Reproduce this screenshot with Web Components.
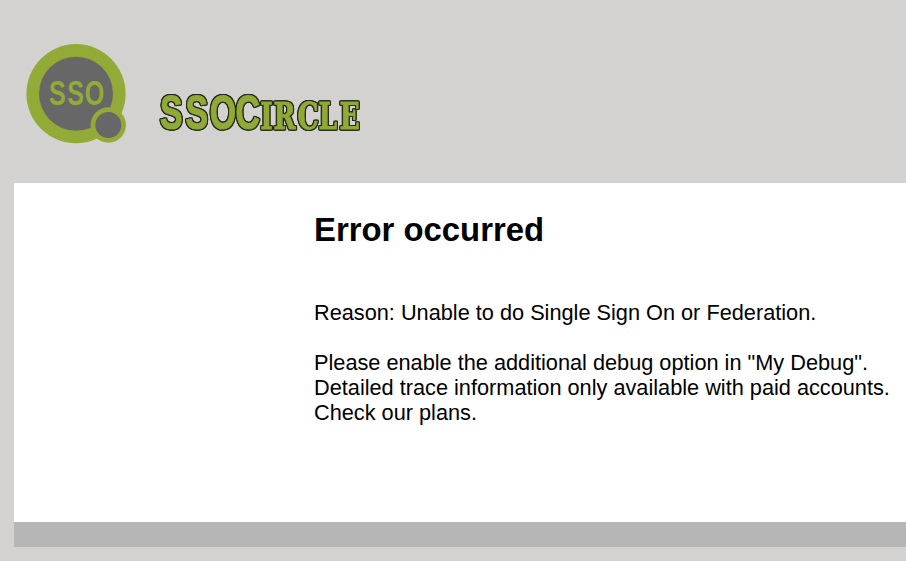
<!DOCTYPE html>
<html lang="en"><head><meta charset="utf-8"><title>SSOCircle</title>
<style>html,body{margin:0;height:100%;background:#d3d2d0;overflow:hidden}body{font:21.73px/25px "Liberation Sans",Arial,sans-serif;color:#000}</style></head>
<body>
<sso-page>
  <sso-brand slot="header"></sso-brand>
  <error-message heading="Error occurred">
    <p>Reason: Unable to do Single Sign On or Federation.</p>
    <p>Please enable the additional debug option in "My Debug".<br>Detailed trace information only available with paid accounts.<br>Check our plans.</p>
  </error-message>
</sso-page>
<script>
class SsoPage extends HTMLElement{constructor(){super();this.attachShadow({mode:'open'}).innerHTML=`
<style>:host{display:grid;grid-template-rows:183px 339px 25px;padding-left:14px;box-sizing:border-box;height:561px}
main{background:#fff;padding-left:300px}footer{background:#b6b6b6}</style>
<header><slot name="header"></slot></header><main><slot></slot></main><footer></footer>`}}
customElements.define('sso-page',SsoPage);

class SsoBrand extends HTMLElement{constructor(){super();this.attachShadow({mode:'open'}).innerHTML=`
<style>:host{display:block;padding:40px 0 0 6px}svg{display:block;overflow:visible}
text{font-family:"Liberation Sans",Arial,sans-serif;font-weight:bold}
.word{fill:#90aa36;stroke:#90aa36;stroke-width:1.2px;stroke-linejoin:miter;stroke-miterlimit:3}
.outline{filter:drop-shadow(1px 0 0 #25281c) drop-shadow(-1px 0 0 #25281c) drop-shadow(0 1px 0 #25281c) drop-shadow(0 -1px 0 #25281c)}
.caps{font-family:"DejaVu Serif","Liberation Serif",serif;stroke-width:.9px}</style>
<svg width="450" height="110" viewBox="20 40 450 110" role="img" aria-label="SSOCircle">
<circle cx="76" cy="93.7" r="49.6" fill="#92ab37"/><circle cx="76" cy="93.7" r="37" fill="#676767"/>
<circle cx="108.3" cy="125" r="17.7" fill="#92ab37"/><circle cx="108.3" cy="125" r="13" fill="#676767"/>
<text transform="translate(49 105.4) scale(.7 1)" font-size="36" x="0 26 51" fill="#92ab37">SSO</text>
<g class="outline"><text class="word" transform="translate(160 129) scale(.69 1)" x="0 37 72 109.5" font-size="49">SSOC</text></g>
<g class="outline"><text class="word caps" transform="translate(260.3 129) scale(.7 1)" x="0 19 53 83 113" font-size="38">IRCLE</text></g>
</svg>`}}
customElements.define('sso-brand',SsoBrand);

class ErrorMessage extends HTMLElement{constructor(){super();this.attachShadow({mode:'open'}).innerHTML=`
<style>:host{display:block;white-space:nowrap}h1{font-size:32.87px;line-height:38px;margin:0;padding:28px 0 51px}
::slotted(p){margin:0 0 25px}</style><h1></h1><slot></slot>`}
connectedCallback(){this.shadowRoot.querySelector('h1').textContent=this.getAttribute('heading')}}
customElements.define('error-message',ErrorMessage);
</script></body></html>
